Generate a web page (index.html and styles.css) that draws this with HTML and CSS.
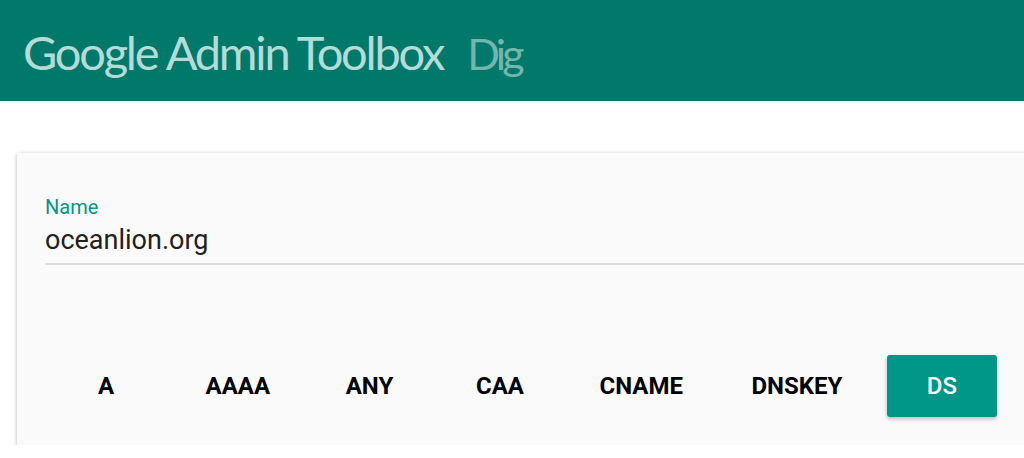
FILE: index.html
```html
<!DOCTYPE html>
<html lang="en">
<head>
<meta charset="utf-8">
<title>Google Admin Toolbox Dig</title>
<link rel="stylesheet" href="styles.css">
</head>
<body>
<header class="topbar">
  <h1 class="brand"><span class="brand-main">Google Admin Toolbox</span><span class="brand-sub">Dig</span></h1>
</header>
<main class="content">
  <section class="card">
    <div class="field">
      <label class="field-label" for="name">Name</label>
      <div class="field-input" id="name">oceanlion.org</div>
    </div>
    <div class="types">
      <button class="type">A</button>
      <button class="type">AAAA</button>
      <button class="type">ANY</button>
      <button class="type">CAA</button>
      <button class="type">CNAME</button>
      <button class="type">DNSKEY</button>
      <button class="type type-active">DS</button>
    </div>
  </section>
</main>
</body>
</html>
```

FILE: styles.css
```css
html, body {
  margin: 0;
  padding: 0;
  background: #ffffff;
  overflow: hidden;
  font-family: Roboto, "Liberation Sans", sans-serif;
}

.topbar {
  height: 101px;
  background: #00796b;
  display: flex;
  align-items: center;
  padding-left: 23px;
  box-sizing: border-box;
}

.brand {
  margin: 0;
  font-family: Lato, "Open Sans", sans-serif;
  font-weight: 400;
  font-size: 47px;
  line-height: 56px;
  letter-spacing: -2.2px;
  white-space: nowrap;
  display: flex;
  align-items: baseline;
  gap: 24px;
  padding-top: 4px;
}

.brand-main {
  color: #b5dbd6;
}

.brand-sub {
  color: #74b6ad;
  font-size: 43px;
  letter-spacing: -3.8px;
}

.content {
  padding: 52px 0 0 17px;
}

.card {
  width: 1100px;
  background: #fafafa;
  box-shadow: 0 1px 4px rgba(0, 0, 0, 0.28), 0 2px 2px rgba(0, 0, 0, 0.06);
  padding: 44px 0 28px 28px;
  box-sizing: border-box;
}

.field {
  display: flex;
  flex-direction: column;
  gap: 7px;
}

.field-label {
  color: #009688;
  font-size: 20px;
  line-height: 20px;
}

.field-input {
  color: #212121;
  font-size: 27px;
  line-height: 32px;
  padding-bottom: 7px;
  border-bottom: 2px solid #dedede;
}

.types {
  display: flex;
  gap: 20.5px;
  margin-top: 90px;
  padding-left: 6px;
}

.type {
  min-width: 110px;
  height: 62px;
  padding: 0 24px;
  border: none;
  border-radius: 3px;
  background: transparent;
  color: #000000;
  font-family: Roboto, "Liberation Sans", sans-serif;
  font-weight: 700;
  font-size: 24px;
  cursor: pointer;
}

.type-active {
  background: #009688;
  color: #ffffff;
  font-weight: 500;
  box-shadow: 0 2px 4px rgba(0, 0, 0, 0.25);
}
```
